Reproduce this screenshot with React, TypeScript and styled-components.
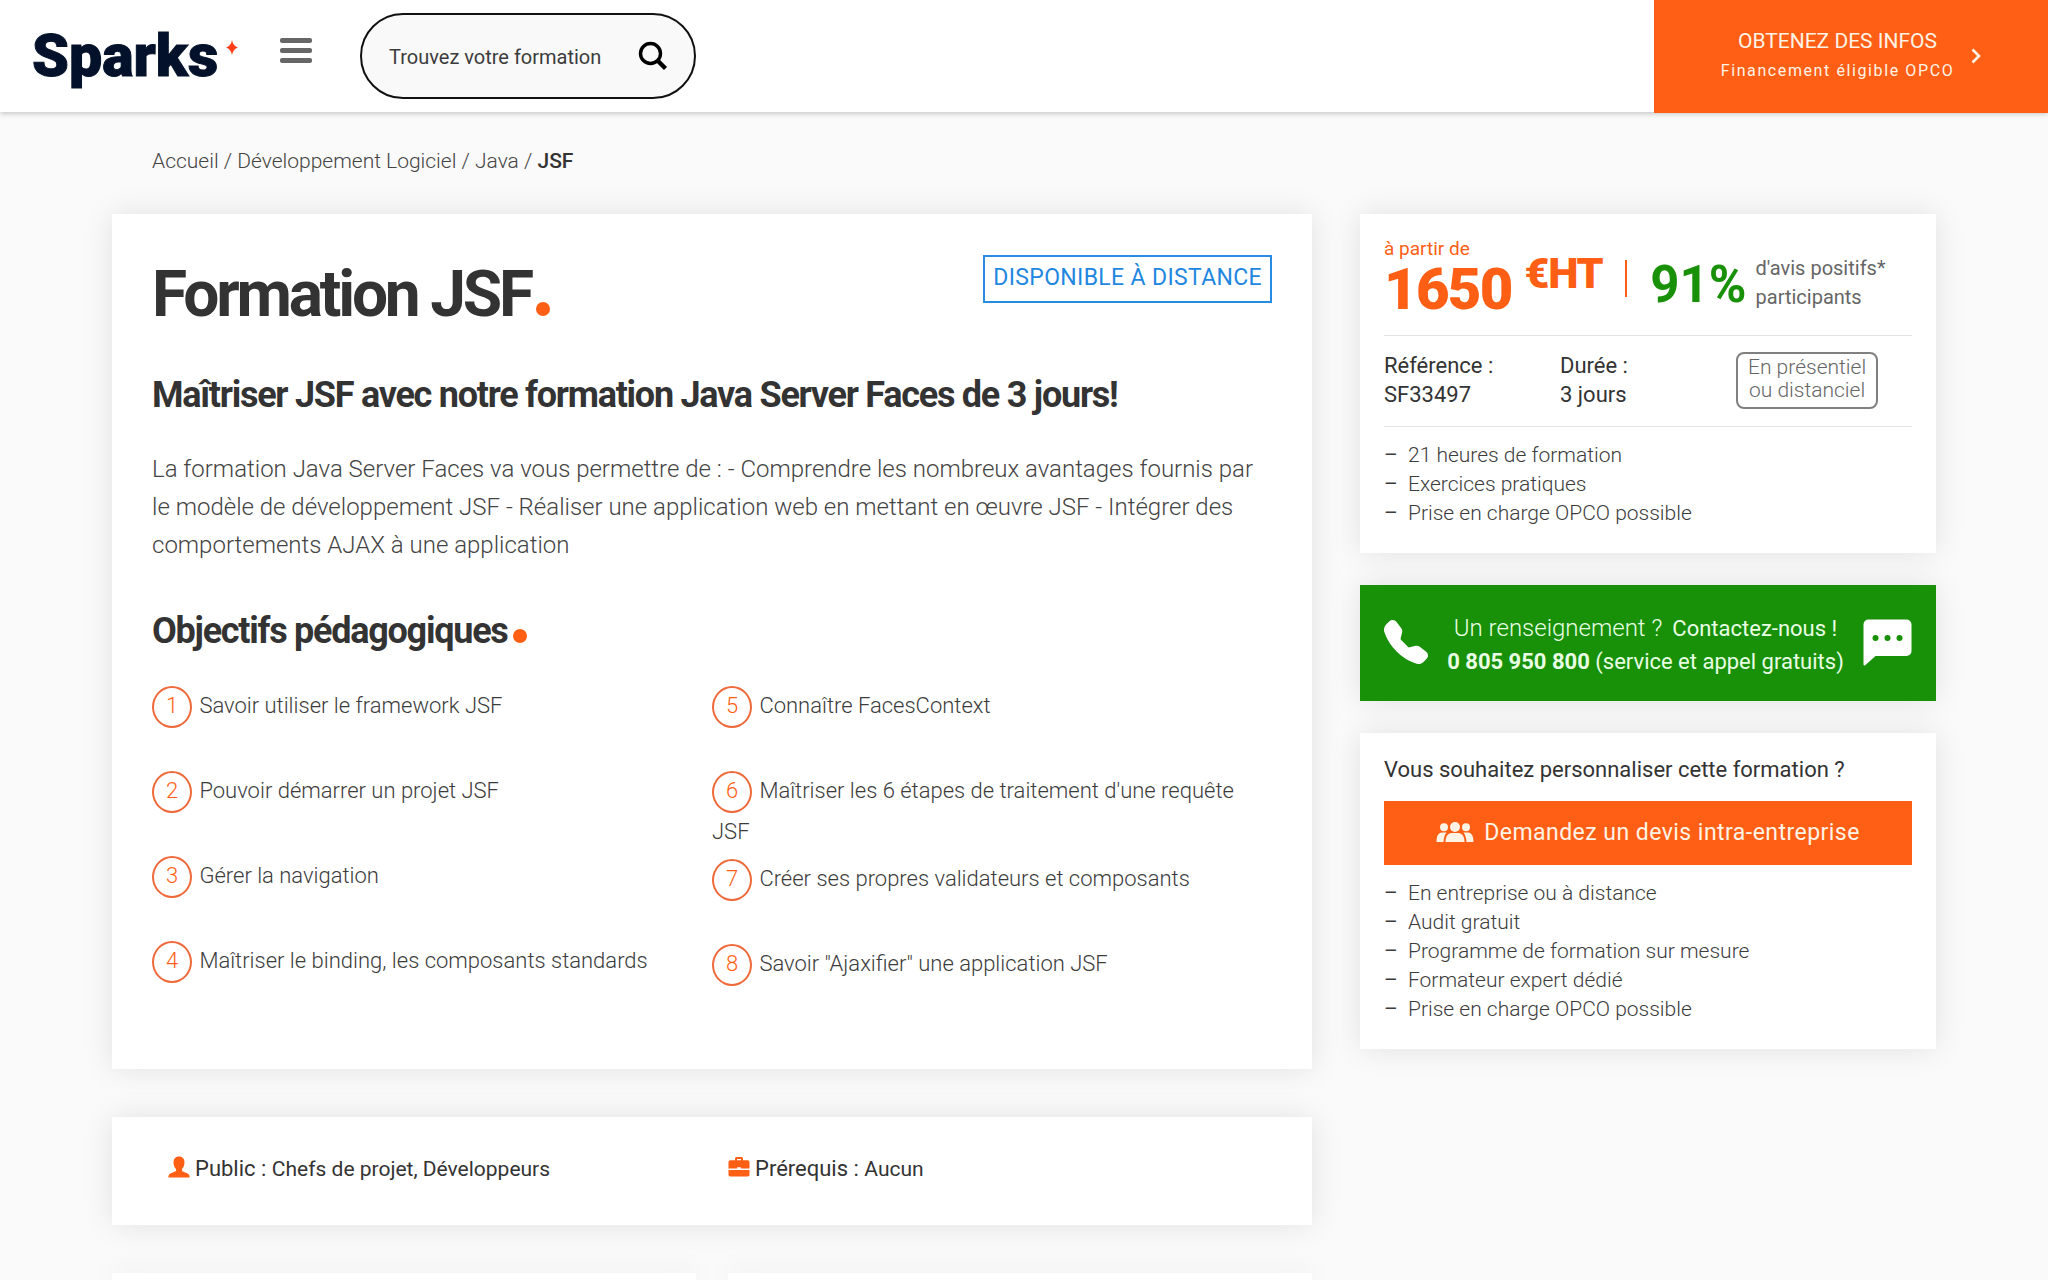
import React from "react";
import styled, { createGlobalStyle } from "styled-components";
import { BsTelephoneFill } from "react-icons/bs";

const orange = "#ff5f15";
const green = "#189008";
const ink = "#333333";

const GlobalStyle = createGlobalStyle`
  *, *::before, *::after { box-sizing: border-box; }
  body {
    margin: 0;
    background: #fafafa;
    color: ${ink};
    font-family: Roboto, "Liberation Sans", sans-serif;
    font-size: 22px;
  }
  a { color: inherit; text-decoration: none; }
  h1, h2, h3, p, ul, ol { margin: 0; padding: 0; }
  ul, ol { list-style: none; }
  svg { display: block; flex: none; }
`;

const Page = styled.div`
  display: flex;
  flex-direction: column;
  min-height: 100vh;
`;

/* ---------- header ---------- */

const Header = styled.header`
  display: flex;
  align-items: center;
  gap: 32px;
  height: 112px;
  padding-left: 32px;
  background: #ffffff;
  box-shadow: 0 2px 5px rgba(0, 0, 0, 0.2);
`;

const Logo = styled.a`
  display: flex;
  align-items: flex-start;
  justify-content: space-between;
  width: 216px;
  padding-right: 10px;
  color: #03122a;
  font-size: 59px;
  font-weight: 900;
  line-height: 72px;
  -webkit-text-stroke: 1px currentColor;
`;

const Spark = styled.svg`
  margin-top: 20px;
`;

const MenuButton = styled.button`
  display: flex;
  flex-direction: column;
  gap: 5px;
  width: 32px;
  padding: 0 0 12px;
  border: 0;
  background: none;
`;

const MenuBar = styled.span`
  height: 5px;
  border-radius: 2px;
  background: #666666;
`;

const SearchForm = styled.form`
  display: flex;
  align-items: center;
  width: 336px;
  height: 86px;
  margin-left: 16px;
  padding: 0 26px 0 27px;
  border: 2px solid #111111;
  border-radius: 43px;
  background: #f9f9f9;
`;

const SearchInput = styled.input`
  flex: 1;
  min-width: 0;
  padding: 2px 0 0;
  border: 0;
  outline: 0;
  background: none;
  color: ${ink};
  font-family: inherit;
  font-size: 20px;
  &::placeholder { color: #3c3c3c; opacity: 1; }
`;

const SearchButton = styled.button`
  padding: 0;
  border: 0;
  background: none;
`;

const InfoLink = styled.a`
  display: flex;
  align-items: center;
  justify-content: center;
  gap: 17px;
  align-self: flex-start;
  width: 394px;
  height: 113px;
  margin-left: auto;
  padding-bottom: 2px;
  background: ${orange};
  color: #fff3e6;
`;

const InfoText = styled.span`
  display: flex;
  flex-direction: column;
  align-items: center;
  font-size: 21px;
  line-height: 30px;
`;

const InfoNote = styled.span`
  font-size: 16px;
  letter-spacing: 0.1em;
`;

/* ---------- page body ---------- */

const Main = styled.main`
  display: flex;
  flex: 1;
  flex-direction: column;
  padding: 35px 112px 0;
`;

const Breadcrumb = styled.nav`
  margin-bottom: 38px;
  padding-left: 40px;
  color: #444444;
  font-size: 21px;
  font-weight: 300;
  line-height: 29px;
`;

const Current = styled.span`
  color: ${ink};
  font-weight: 500;
`;

const Columns = styled.div`
  display: grid;
  flex: 1;
  grid-template-columns: minmax(0, 1fr) 576px;
  gap: 48px;
`;

const Content = styled.div`
  display: flex;
  flex-direction: column;
  gap: 48px;
`;

const Sidebar = styled.aside`
  display: flex;
  flex-direction: column;
  gap: 32px;
`;

const Card = styled.section`
  background: #ffffff;
  box-shadow: 0 0 28px rgba(0, 0, 0, 0.1);
`;

const CourseCard = styled(Card)`
  padding: 41px 40px 40px;
`;

const TitleRow = styled.div`
  display: flex;
  align-items: flex-start;
  justify-content: space-between;
`;

const Title = styled.h1`
  font-size: 64px;
  font-weight: 700;
  letter-spacing: -0.05em;
  line-height: 80px;
`;

const Dot = styled.span`
  display: inline-block;
  width: 14px;
  height: 14px;
  margin-left: 5px;
  border-radius: 50%;
  background: ${orange};
`;

const RemoteTag = styled.span`
  padding: 0 8px 2px;
  border: 2px solid #2a8ce0;
  color: #1f87e0;
  font-size: 23px;
  letter-spacing: 0.015em;
  line-height: 42px;
`;

const Heading = styled.h2`
  font-size: 36px;
  font-weight: 700;
  letter-spacing: -0.035em;
  line-height: 48px;
`;

const Tagline = styled(Heading)`
  margin: 36px 0 31px;
`;

const Intro = styled.p`
  margin-bottom: 43px;
  color: #444444;
  font-size: 24px;
  font-weight: 300;
  line-height: 38px;
`;

const Goals = styled.div`
  display: grid;
  grid-template-columns: 1fr 1fr;
  margin-top: 31px;
`;

const Goal = styled.li`
  min-height: 77px;
  margin-bottom: 8px;
  color: #3c3c3c;
  font-size: 22px;
  font-weight: 300;
  line-height: 38px;
`;

const GoalNumber = styled.span`
  display: inline-block;
  width: 40px;
  margin-right: 2px;
  padding-bottom: 2px;
  border: 2px solid #ee6a3a;
  border-radius: 50%;
  color: ${orange};
  line-height: 36px;
  text-align: center;
`;

const FactsCard = styled(Card)`
  display: grid;
  grid-template-columns: 1fr 1fr;
  padding: 37px 40px 41px;
`;

const Fact = styled.p`
  display: flex;
  align-items: center;
  gap: 5px;
  padding-left: 16px;
  line-height: 30px;
  & > svg { margin-bottom: 4px; }
`;

const FactValue = styled.span`
  font-size: 21px;
`;

const MoreCards = styled.div`
  display: grid;
  flex: 1;
  grid-template-columns: 1fr 1fr;
  gap: 32px;
`;

/* ---------- sidebar ---------- */

const PriceCard = styled(Card)`
  padding: 24px 24px 25px;
`;

const PriceRow = styled.div`
  display: flex;
  align-items: center;
  padding-bottom: 17px;
`;

const PriceLabel = styled.p`
  color: ${orange};
  font-size: 19px;
  line-height: 22px;
`;

const Price = styled.p`
  display: flex;
  gap: 13px;
  color: ${orange};
  font-size: 58px;
  font-weight: 900;
  letter-spacing: -0.03em;
  line-height: 58px;
`;

const Currency = styled.span`
  font-size: 43px;
  letter-spacing: -0.03em;
  line-height: 26px;
`;

const Divider = styled.span`
  width: 2px;
  height: 37px;
  margin: 0 23px;
  background: ${orange};
`;

const Rating = styled.p`
  display: flex;
  align-items: center;
  gap: 9px;
  padding-top: 10px;
  color: #666666;
  font-size: 20px;
  line-height: 29px;
`;

const Score = styled.strong`
  padding-top: 4px;
  color: ${green};
  font-size: 51px;
  line-height: 58px;
`;

const Details = styled.div`
  display: grid;
  grid-template-columns: 1fr 1fr 1fr;
  align-items: end;
  justify-items: start;
  padding: 15px 0 17px;
  border-top: 1px solid #e3e3e3;
  border-bottom: 1px solid #e3e3e3;
  line-height: 29px;
`;

const ModeTag = styled.span`
  padding: 2px 10px 5px;
  border: 2px solid #808080;
  border-radius: 8px;
  color: #666666;
  font-size: 21px;
  font-weight: 300;
  line-height: 23px;
  text-align: center;
`;

const DashList = styled.ul`
  margin-top: 14px;
  color: #3c3c3c;
  font-size: 21px;
  font-weight: 300;
  line-height: 29px;
`;

const DashItem = styled.li`
  display: flex;
  &::before {
    content: "–";
    width: 24px;
    font-weight: 400;
  }
`;

const ContactCard = styled(Card)`
  display: flex;
  align-items: center;
  justify-content: space-between;
  min-height: 116px;
  padding: 0 24px;
  background: ${green};
  color: #e9ffe4;
`;

const ContactText = styled.div`
  padding-top: 4px;
  line-height: 33px;
  text-align: center;
`;

const ContactLine = styled.p`
  display: flex;
  align-items: center;
  justify-content: center;
  gap: 10px;
`;

const Question = styled.span`
  font-size: 24px;
  font-weight: 300;
`;

const QuoteCard = styled(Card)`
  padding: 22px 24px 25px;
`;

const QuoteTitle = styled.h3`
  font-size: 22px;
  font-weight: 400;
  line-height: 29px;
`;

const QuoteButton = styled.button`
  display: flex;
  align-items: center;
  justify-content: center;
  gap: 10px;
  width: 100%;
  height: 64px;
  margin-top: 17px;
  padding: 0 0 2px;
  border: 0;
  background: ${orange};
  color: #fff3e6;
  font-family: inherit;
  font-size: 23px;
  letter-spacing: 0.02em;
`;

const IconLink = styled.a`
  padding-bottom: 2px;
  color: #ffffff;
`;

/* ---------- icons ---------- */

const SearchIcon = () => (
  <svg width="30" height="30" viewBox="0 0 30 30" fill="none" stroke="#000" aria-hidden="true">
    <circle cx="12.5" cy="12.5" r="10" strokeWidth="3.4" />
    <path d="M19.5 19.5 27.5 27.5" strokeWidth="4.4" />
  </svg>
);

const ChevronIcon = () => (
  <svg width="10" height="16" viewBox="0 0 10 16" fill="none" stroke="currentColor" strokeWidth="2.6" aria-hidden="true">
    <path d="M1.5 1.5 8 8 1.5 14.5" />
  </svg>
);

const BubbleIcon = () => (
  <svg width="49" height="47" viewBox="0 0 49 47" aria-hidden="true">
    <path fill="currentColor" d="M5.500 0.500H43.500a5 5 0 0 1 5 5V32a5 5 0 0 1-5 5H12.500L2.200 46.300Q.5 47 .5 45.300V5.500a5 5 0 0 1 5-5Z" />
    <g fill={green}>
      <circle cx="12.500" cy="19" r="3" />
      <circle cx="24.500" cy="19" r="3" />
      <circle cx="36.500" cy="19" r="3" />
    </g>
  </svg>
);

const TeamIcon = () => (
  <svg width="38" height="20" viewBox="0 0 38 20" fill="currentColor" aria-hidden="true">
    <circle cx="19" cy="5" r="5" />
    <circle cx="8" cy="5.200" r="4" />
    <circle cx="30" cy="5.200" r="4" />
    <path d="M9.500 20c0-5.500 2.500-9 6-9h7c3.500 0 6 3.500 6 9Z" />
    <path d="M.5 20c0-6 2-9.500 5.500-9.500h4.500C8.800 12.700 7.600 16 7.500 20Z" />
    <path d="M37.500 20c0-6-2-9.500-5.500-9.500h-4.500c1.700 2.200 2.900 5.500 3 9.500Z" />
  </svg>
);

const PersonIcon = () => (
  <svg width="22" height="22" viewBox="0 0 22 22" fill={orange} aria-hidden="true">
    <path d="M11 0.500c3.600 0 5.500 2.500 5.500 6 0 2.900-1 5-2.500 6.500v1.800c.3 1 6 2.200 7 4 .5.900.6 1.800.6 2.700H.4c0-.9.1-1.800.6-2.700 1-1.800 6.700-3 7-4V13c-1.500-1.500-2.500-3.600-2.500-6.500 0-3.500 1.900-6 5.500-6Z" />
  </svg>
);

const BriefcaseIcon = () => (
  <svg width="22" height="22" viewBox="0 0 22 22" fill={orange} aria-hidden="true">
    <path fillRule="evenodd" d="M7 4.200V2.500Q7 1 8.500 1h5Q15 1 15 2.500V4.200h4.800q1.700 0 1.700 1.700v6.600H12.800v-1.200H9.200v1.200H.5V5.900q0-1.700 1.700-1.700ZM9 4.200h4V2.900H9Z" />
    <path d="M.5 14H21.500v4.800q0 1.700-1.700 1.700H2.200Q.5 20.500 .5 18.800Z" />
  </svg>
);

/* ---------- data ---------- */

const goals = [
  ["Savoir utiliser le framework JSF", "Pouvoir démarrer un projet JSF", "Gérer la navigation", "Maîtriser le binding, les composants standards"],
  ["Connaître FacesContext", "Maîtriser les 6 étapes de traitement d'une requête JSF", "Créer ses propres validateurs et composants", "Savoir \"Ajaxifier\" une application JSF"],
];

const priceNotes = ["21 heures de formation", "Exercices pratiques", "Prise en charge OPCO possible"];

const quoteNotes = [
  "En entreprise ou à distance",
  "Audit gratuit",
  "Programme de formation sur mesure",
  "Formateur expert dédié",
  "Prise en charge OPCO possible",
];

const Notes = ({ items }: { items: string[] }) => (
  <DashList>
    {items.map((item) => (
      <DashItem key={item}>{item}</DashItem>
    ))}
  </DashList>
);

export default function App() {
  return (
    <Page>
      <GlobalStyle />
      <Header>
        <Logo href="#">
          Sparks
          <Spark width="12" height="15" viewBox="0 0 12 15" stroke="none" aria-hidden="true">
            <path fill="#ff3c14" d="M6 0Q7 6 12 7.500 7 9 6 15 5 9 0 7.500 5 6 6 0Z" />
          </Spark>
        </Logo>
        <MenuButton type="button" aria-label="Menu">
          <MenuBar />
          <MenuBar />
          <MenuBar />
        </MenuButton>
        <SearchForm role="search">
          <SearchInput type="text" aria-label="Trouvez votre formation" placeholder="Trouvez votre formation" />
          <SearchButton type="submit" aria-label="Rechercher">
            <SearchIcon />
          </SearchButton>
        </SearchForm>
        <InfoLink href="#">
          <InfoText>
            OBTENEZ DES INFOS
            <InfoNote>Financement éligible OPCO</InfoNote>
          </InfoText>
          <ChevronIcon />
        </InfoLink>
      </Header>

      <Main>
        <Breadcrumb>
          <a href="#">Accueil</a> / <a href="#">Développement Logiciel</a> / <a href="#">Java</a> / <Current>JSF</Current>
        </Breadcrumb>

        <Columns>
          <Content>
            <CourseCard>
              <TitleRow>
                <Title>
                  Formation JSF
                  <Dot />
                </Title>
                <RemoteTag>DISPONIBLE À DISTANCE</RemoteTag>
              </TitleRow>
              <Tagline>Maîtriser JSF avec notre formation Java Server Faces de 3 jours!</Tagline>
              <Intro>
                La formation Java Server Faces va vous permettre de : - Comprendre les nombreux avantages fournis par le
                modèle de développement JSF - Réaliser une application web en mettant en œuvre JSF - Intégrer des
                comportements AJAX à une application
              </Intro>
              <Heading>
                Objectifs pédagogiques
                <Dot />
              </Heading>
              <Goals>
                {goals.map((column, c) => (
                  <ol key={c}>
                    {column.map((goal, i) => (
                      <Goal key={goal}>
                        <GoalNumber>{c * 4 + i + 1}</GoalNumber> {goal}
                      </Goal>
                    ))}
                  </ol>
                ))}
              </Goals>
            </CourseCard>

            <FactsCard>
              <Fact>
                <PersonIcon />
                <span>
                  Public : <FactValue>Chefs de projet, Développeurs</FactValue>
                </span>
              </Fact>
              <Fact>
                <BriefcaseIcon />
                <span>
                  Prérequis : <FactValue>Aucun</FactValue>
                </span>
              </Fact>
            </FactsCard>

            <MoreCards>
              <Card />
              <Card />
            </MoreCards>
          </Content>

          <Sidebar>
            <PriceCard>
              <PriceRow>
                <div>
                  <PriceLabel>à partir de</PriceLabel>
                  <Price>
                    1650 <Currency>€HT</Currency>
                  </Price>
                </div>
                <Divider />
                <Rating>
                  <Score>91%</Score>
                  <span>
                    d'avis positifs*
                    <br />
                    participants
                  </span>
                </Rating>
              </PriceRow>
              <Details>
                <span>
                  Référence :<br />
                  SF33497
                </span>
                <span>
                  Durée :<br />3 jours
                </span>
                <ModeTag>
                  En présentiel
                  <br />
                  ou distanciel
                </ModeTag>
              </Details>
              <Notes items={priceNotes} />
            </PriceCard>

            <ContactCard>
              <IconLink href="tel:0805950800" aria-label="Appeler">
                <BsTelephoneFill size={44} />
              </IconLink>
              <ContactText>
                <ContactLine>
                  <Question>Un renseignement ?</Question>
                  <a href="#">Contactez-nous !</a>
                </ContactLine>
                <p>
                  <strong>0 805 950 800</strong> (service et appel gratuits)
                </p>
              </ContactText>
              <IconLink href="#" aria-label="Message">
                <BubbleIcon />
              </IconLink>
            </ContactCard>

            <QuoteCard>
              <QuoteTitle>Vous souhaitez personnaliser cette formation ?</QuoteTitle>
              <QuoteButton type="button">
                <TeamIcon />
                Demandez un devis intra-entreprise
              </QuoteButton>
              <Notes items={quoteNotes} />
            </QuoteCard>
          </Sidebar>
        </Columns>
      </Main>
    </Page>
  );
}
